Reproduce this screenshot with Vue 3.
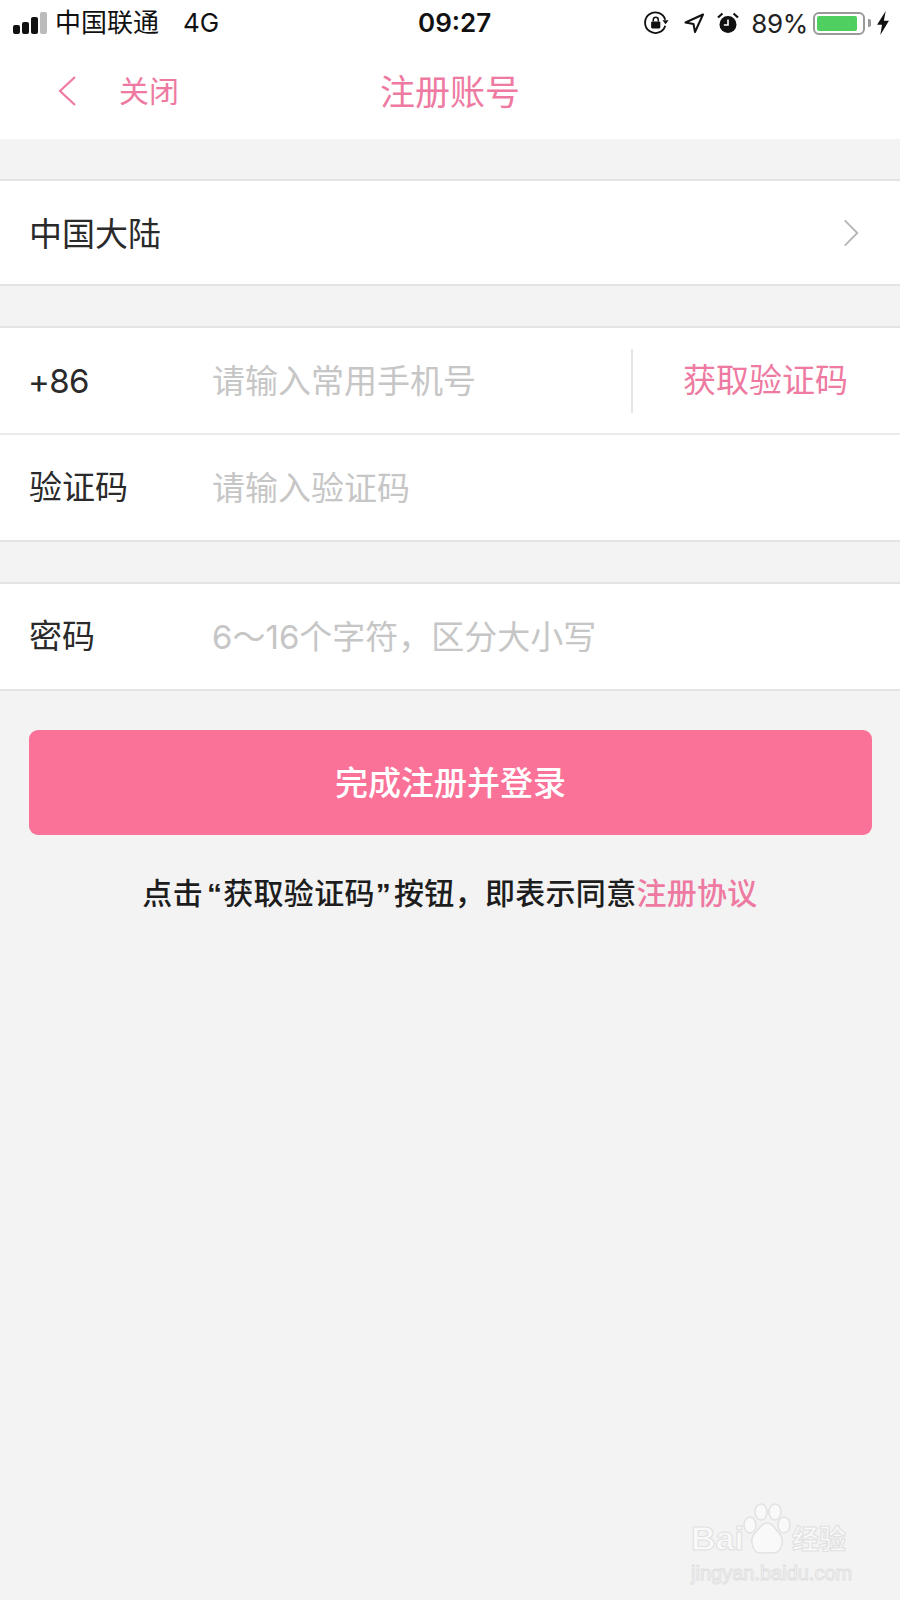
<template>
  <div class="page">
    <header class="status-bar">
      <div class="status-left">
        <span class="signal"><i v-for="h in signalBars" :key="h.id" :class="{ off: h.off }" :style="{ height: h.height + 'px' }"></i></span>
        <span class="carrier">中国联通</span>
        <span class="net">4G</span>
      </div>
      <div class="status-time">09:27</div>
      <div class="status-right">
        <svg class="ico-lock" viewBox="0 0 24 24" width="26" height="26">
          <path d="M20.5 14.5A9.5 9.5 0 1 1 20.5 9" fill="none" stroke="#111" stroke-width="1.7" />
          <path d="M18 9.5h5.6l-2.8 3.6z" fill="#111" />
          <rect x="7.5" y="10.5" width="8.5" height="6.5" rx="1" fill="#111" />
          <path d="M9.5 10.5V9a2.3 2.3 0 0 1 4.6 0v1.5" fill="none" stroke="#111" stroke-width="1.4" />
        </svg>
        <svg class="ico-loc" viewBox="0 0 22 22" width="22" height="22">
          <path d="M20 2.5 2.5 10.5l8 1.5 1.5 8z" fill="none" stroke="#111" stroke-width="2" stroke-linejoin="round" />
        </svg>
        <svg class="ico-alarm" viewBox="0 0 24 24" width="24" height="24">
          <circle cx="12" cy="13.5" r="8.5" fill="#111" />
          <path d="M12 8.5v5.5H7.8" fill="none" stroke="#fff" stroke-width="1.6" />
          <path d="M2 6.5 6.5 2.5M22 6.5l-4.5-4" stroke="#111" stroke-width="2.2" fill="none" />
        </svg>
        <span class="percent">89%</span>
        <span class="battery"><b></b></span><span class="battery-cap"></span>
        <svg class="ico-bolt" viewBox="0 0 14 24" width="16" height="26">
          <path d="M9.5 1 1.5 13.5h4.6L4.5 23l8-13H7.8z" fill="#111" />
        </svg>
      </div>
    </header>

    <nav class="nav-bar">
      <div class="nav-left">
        <svg viewBox="0 0 20 32" width="20" height="32" class="back">
          <path d="M18 2 3 16l15 14" fill="none" stroke="#ee7aa2" stroke-width="2.2" />
        </svg>
        <span class="close">关闭</span>
      </div>
      <h1 class="title">注册账号</h1>
    </nav>

    <section class="group region-row">
      <span>中国大陆</span>
      <svg viewBox="0 0 20 32" width="18" height="30">
        <path d="M3 2 17 16 3 30" fill="none" stroke="#b4b4b4" stroke-width="2" />
      </svg>
    </section>

    <section class="group">
      <div class="row">
        <span class="label phone-code">+86</span>
        <input class="field" type="text" placeholder="请输入常用手机号" />
        <button type="button" class="code-btn">获取验证码</button>
      </div>
      <div class="row">
        <span class="label">验证码</span>
        <input class="field" type="text" placeholder="请输入验证码" />
      </div>
    </section>

    <section class="group">
      <div class="row">
        <span class="label">密码</span>
        <input class="field" type="password" placeholder="6～16个字符，区分大小写" />
      </div>
    </section>

    <button type="button" class="submit">完成注册并登录</button>
    <p class="agreement">点击<i class="quote-l">“</i>获取验证码<i class="quote-r">”</i>按钮，即表示同意<span>注册协议</span></p>

    <div class="watermark">
      <div class="wm-top">
        <span>Bai</span>
        <svg viewBox="0 0 48 52" width="48" height="52" class="paw">
          <g fill="#f9f9f9" stroke="#e2e2e2" stroke-width="1.5">
            <ellipse cx="18" cy="9" rx="6" ry="8" />
            <ellipse cx="32" cy="9" rx="6" ry="8" />
            <ellipse cx="7" cy="22" rx="6" ry="8" />
            <ellipse cx="41" cy="22" rx="6" ry="8" />
            <path d="M24 20c-6 0-8 6-12 10-6 6-3 21 7 20 3 0 7-1 10 0 10 1 13-14 7-20-4-4-6-10-12-10z" />
          </g>
          <text x="24" y="44" text-anchor="middle" class="paw-text">du</text>
        </svg>
        <em>经验</em>
      </div>
      <div class="wm-url">jingyan.baidu.com</div>
    </div>
  </div>
</template>

<script setup>
const signalBars = [
  { id: 1, height: 9 },
  { id: 2, height: 12 },
  { id: 3, height: 17 },
  { id: 4, height: 22, off: true }
]
</script>

<style>
html,
body {
  margin: 0;
  background: #f3f3f3;
}
</style>

<style scoped>
.page {
  position: relative;
  width: 900px;
  height: 1600px;
  overflow: hidden;
  background: #f3f3f3;
  font-family: Inter, "Noto Sans CJK SC", sans-serif;
  color: #2a2a2a;
}

.status-bar {
  display: flex;
  align-items: center;
  justify-content: space-between;
  height: 46px;
  padding: 0 9px 0 13px;
  background: #fff;
  color: #111;
  position: relative;
}

.status-left,
.status-right {
  display: flex;
  align-items: center;
}

.status-left {
  align-items: baseline;
  line-height: 46px;
}

.signal {
  display: flex;
  align-self: center;
  align-items: flex-end;
  gap: 2px;
  height: 22px;
  margin-right: 8px;
}

.signal i {
  width: 7px;
  border-radius: 2px;
  background: #111;
}

.signal i.off {
  background: #bbb;
}

.carrier {
  font-size: 26px;
}

.net {
  font-size: 26px;
  margin-left: 24px;
}

.status-time {
  position: absolute;
  left: 418px;
  top: 0;
  line-height: 46px;
  font-size: 26px;
  font-weight: 600;
}

.status-right svg {
  flex: none;
}

.ico-loc {
  margin-left: 14px;
}

.ico-alarm {
  margin-left: 11px;
}

.percent {
  font-size: 26px;
  margin-left: 11px;
  letter-spacing: -0.3px;
  color: #222;
}

.battery {
  width: 52px;
  height: 23px;
  box-sizing: border-box;
  margin-left: 5px;
  padding: 2px;
  border: 2px solid #999;
  border-radius: 6px;
  display: flex;
}

.battery b {
  flex: 1;
  margin-right: 4px;
  border-radius: 2px;
  background: #4ecf60;
}

.battery-cap {
  width: 3px;
  height: 8px;
  margin-left: 3px;
  border-radius: 0 2px 2px 0;
  background: #999;
}

.ico-bolt {
  margin-left: 4px;
}

.nav-bar {
  position: relative;
  display: flex;
  align-items: center;
  justify-content: center;
  box-sizing: border-box;
  height: 93px;
  padding-bottom: 7px;
  background: #fff;
}

.nav-left {
  position: absolute;
  left: 57px;
  top: 0;
  bottom: 3px;
  display: flex;
  align-items: center;
  gap: 42px;
}

.close {
  padding-bottom: 4px;
  font-size: 30px;
  color: #ee7aa2;
}

.title {
  margin: 0;
  font-size: 35px;
  font-weight: 400;
  color: #ee7aa2;
}

.group {
  margin-top: 40px;
  background: #fff;
  border-top: 2px solid #e4e4e4;
  border-bottom: 2px solid #e4e4e4;
}

.region-row {
  display: flex;
  align-items: center;
  justify-content: space-between;
  height: 103px;
  padding: 0 40px 0 29px;
  font-size: 33px;
}

.region-row span {
  padding-bottom: 2px;
}

.row {
  display: flex;
  align-items: center;
  height: 105px;
  padding-left: 29px;
}

.row + .row {
  border-top: 2px solid #ebebeb;
}

.label {
  flex: none;
  width: 183px;
  padding-bottom: 5px;
  font-size: 33px;
}

.phone-code {
  padding-bottom: 0;
  margin-left: -1px;
  width: 184px;
  letter-spacing: -0.6px;
}

.field {
  flex: 1;
  min-width: 0;
  padding: 0;
  border: 0;
  outline: 0;
  background: none;
  font: inherit;
  font-size: 33px;
  color: #222;
}

.field::placeholder {
  color: #c6c6c6;
  opacity: 1;
}

.code-btn {
  flex: none;
  width: 269px;
  height: 64px;
  box-sizing: border-box;
  padding: 0 0 5px 50px;
  border: 0;
  border-left: 2px solid #e4e4e4;
  background: none;
  text-align: left;
  font: inherit;
  font-size: 33px;
  color: #ee7aa2;
}

.submit {
  display: block;
  width: 843px;
  height: 105px;
  margin: 39px 0 0 29px;
  padding: 0 0 3px;
  border: 0;
  border-radius: 9px;
  background: #fb7299;
  color: #fff;
  font: inherit;
  font-size: 33px;
  font-weight: 500;
}

.agreement {
  margin: 35px 0 0;
  text-align: center;
  font-family: "Noto Sans CJK SC", sans-serif;
  font-size: 30px;
  font-weight: 500;
  letter-spacing: 0.3px;
  line-height: 42px;
  color: #1d1d1d;
}

.agreement i {
  font-style: normal;
  font-family: "Liberation Sans", sans-serif;
  font-weight: 700;
}

.quote-l {
  margin: 0 1px 0 4px;
}

.quote-r {
  margin: 0 3px 0 1px;
}

.agreement span {
  color: #ee7aa2;
}

.watermark {
  position: absolute;
  left: 691px;
  top: 1503px;
  width: 170px;
  color: #f9f9f9;
  font-family: "Liberation Sans", "Noto Sans CJK SC", sans-serif;
  -webkit-text-stroke: 1px #e0e0e0;
}

.wm-top {
  display: flex;
  align-items: flex-end;
  height: 52px;
}

.wm-top span {
  font-size: 34px;
  font-weight: 700;
  line-height: 34px;
}

.paw {
  flex: none;
  margin-left: -1px;
}

.paw-text {
  font-size: 15px;
  font-weight: 700;
  fill: #f9f9f9;
  -webkit-text-stroke: 0.6px #d6d6d6;
}

.wm-top em {
  font-style: normal;
  font-size: 27px;
  font-weight: 700;
  line-height: 30px;
  margin-left: 1px;
}

.wm-url {
  margin-top: 6px;
  font-size: 20px;
  line-height: 24px;
  white-space: nowrap;
}
</style>
